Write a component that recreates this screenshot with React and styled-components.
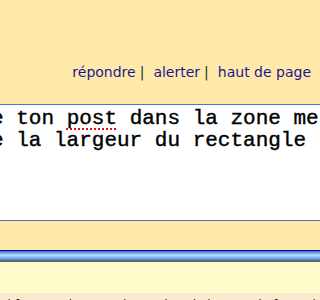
import React from "react";
import styled, { createGlobalStyle } from "styled-components";

const GlobalStyle = createGlobalStyle`
  html, body {
    margin: 0;
    padding: 0;
    background: #ffe9aa;
    overflow: hidden;
  }
`;

const Page = styled.div`
  display: flex;
  flex-direction: column;
  width: 320px;
  height: 300px;
  overflow: hidden;

  & > * {
    flex-shrink: 0;
  }
`;

const TopPanel = styled.div`
  height: 104px;
  box-sizing: border-box;
  padding: 64px 9px 0 0;
  background: #ffe9aa;
  display: flex;
  justify-content: flex-end;
  align-items: flex-start;
`;

const Actions = styled.div`
  font-family: "DejaVu Sans", Verdana, sans-serif;
  font-size: 14px;
  line-height: 16px;
  white-space: pre;
  color: #1b168c;
`;

const ActionLink = styled.a`
  color: #1b168c;
  text-decoration: none;
  cursor: pointer;
`;

const Sep = styled.span`
  color: #2a2a2a;
  margin: 0 9px 0 4px;
`;

const Editor = styled.div`
  height: 117px;
  box-sizing: border-box;
  margin: 0 -4px;
  padding: 3px 0 0 0;
  background: #fff;
  border: 1px solid #4a76c4;
  overflow: hidden;
  font-family: "Liberation Mono", "Courier New", monospace;
  font-size: 21px;
  line-height: 22px;
  color: #000;
  white-space: pre;
  -webkit-text-stroke: 0.4px #000;
`;

const Line = styled.div`
  margin-left: -6px;
`;

const Misspelled = styled.span`
  text-decoration: underline dotted #e01010;
  text-decoration-thickness: 2px;
  text-underline-offset: 4px;
`;

const Band = styled.div`
  height: ${(p) => p.$h}px;
  background: ${(p) => p.$bg};
`;

const Divider = styled.div`
  height: 12px;
  box-sizing: border-box;
  border-top: 1px solid #00109a;
  border-bottom: 2px solid #5c6470;
  background: linear-gradient(
    to bottom,
    #2f5fc4 0%,
    #7fb0ec 25%,
    #b8dafc 50%,
    #7fb0ec 75%,
    #4f86d6 100%
  );
`;

const FooterRow = styled.div`
  flex: 1 1 auto;
  min-height: 0;
  overflow: hidden;
  background: #fce9cf;
  padding: 4px 0 0 4px;
  font-family: "DejaVu Sans", Verdana, sans-serif;
  font-size: 12px;
  line-height: 17px;
  color: #111;
  white-space: nowrap;
`;

export default function App() {
  return (
    <>
      <GlobalStyle />
      <Page>
        <TopPanel>
          <Actions>
            <ActionLink>répondre</ActionLink>
            <Sep>|</Sep>
            <ActionLink>alerter</ActionLink>
            <Sep>|</Sep>
            <ActionLink>haut de page</ActionLink>
          </Actions>
        </TopPanel>
        <Editor>
          <Line>
            e ton <Misspelled>post</Misspelled> dans la zone message
          </Line>
          <Line>e la largeur du rectangle lorsque</Line>
        </Editor>
        <Band $h={29} $bg="#ffe9aa" />
        <Divider />
        <Band $h={31} $bg="#fffccb" />
        <FooterRow>
          Il faut que le texte tienne dans la largeur du forum lui-même
        </FooterRow>
      </Page>
    </>
  );
}
